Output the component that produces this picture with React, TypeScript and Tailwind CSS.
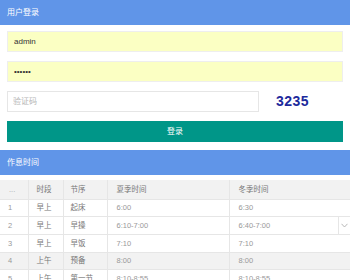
import React from "react";

const rows = [
  { no: "1", seg: "早上", item: "起床", summer: "6:00", winter: "6:30" },
  { no: "2", seg: "早上", item: "早操", summer: "6:10-7:00", winter: "6:40-7:00", menu: true },
  { no: "3", seg: "早上", item: "早饭", summer: "7:10", winter: "7:10" },
  { no: "4", seg: "上午", item: "预备", summer: "8:00", winter: "8:00", gray: true },
  { no: "5", seg: "上午", item: "第一节", summer: "8:10-8:55", winter: "8:10-8:55" },
];

const App = () => {
  return (
    <div
      className="w-[350px] h-[280px] overflow-hidden bg-white text-[#777]"
      style={{ fontFamily: '"Liberation Sans", "Noto Sans CJK SC", sans-serif' }}
    >
      {/* login */}
      <div className="h-[25px] bg-[#6095e8] flex items-center pl-[7px] text-white text-[8px]">
        用户登录
      </div>
      <div className="px-[7px] pt-[6px] flex flex-col gap-[9px]">
        <input
          readOnly
          value="admin"
          className="h-[21px] w-full bg-[#fbffc3] border border-[#eeeeee] px-[6px] text-[8px] text-[#333] outline-none"
        />
        <input
          readOnly
          type="password"
          value="123456"
          className="h-[21px] w-full bg-[#fbffc3] border border-[#eeeeee] px-[6px] text-[8px] text-[#333] outline-none"
        />
        <div className="flex items-center">
          <input
            readOnly
            placeholder="验证码"
            className="h-[21px] w-[252px] bg-white border border-[#e6e6e6] px-[5px] text-[8px] placeholder:text-[#b5b5b5] outline-none"
          />
          <span className="ml-[17px] text-[14px] font-bold text-[#1d2a9c] tracking-[0.5px]">3235</span>
        </div>
        <button className="h-[21px] w-full bg-[#009688] text-white text-[8px]">登录</button>
      </div>

      {/* schedule */}
      <div className="mt-[8px] h-[25px] bg-[#6095e8] flex items-center pl-[7px] text-white text-[8px]">
        作息时间
      </div>
      <table className="mt-[5px] w-[350px] table-fixed border-collapse text-[7.5px]">
        <colgroup>
          <col className="w-[28px]" />
          <col className="w-[35px]" />
          <col className="w-[44px]" />
          <col className="w-[122px]" />
          <col />
        </colgroup>
        <thead>
          <tr className="h-[19px] bg-[#f2f2f2]">
            <th className="font-normal text-left pl-[9px] border-r border-[#e6e6e6] text-[#aaa]">...</th>
            <th className="font-normal text-left pl-[8px] border-r border-[#e6e6e6]">时段</th>
            <th className="font-normal text-left pl-[7px] border-r border-[#e6e6e6]">节序</th>
            <th className="font-normal text-left pl-[9px] border-r border-[#e6e6e6]">夏季时间</th>
            <th className="font-normal text-left pl-[9px]">冬季时间</th>
          </tr>
        </thead>
        <tbody>
          {rows.map((r) => (
            <tr
              key={r.no}
              className={`h-[17.5px] border-t border-[#e6e6e6] ${r.gray ? "bg-[#f2f2f2]" : "bg-white"}`}
            >
              <td className="pl-[8px] border-r border-[#e6e6e6] text-[#999]">{r.no}</td>
              <td className="pl-[8px] border-r border-[#e6e6e6]">{r.seg}</td>
              <td className="pl-[7px] border-r border-[#e6e6e6]">{r.item}</td>
              <td className="pl-[9px] border-r border-[#e6e6e6] text-[#999]">{r.summer}</td>
              <td className="pl-[9px] text-[#999]">
                <div className="flex items-center">
                  <span className="flex-1">{r.winter}</span>
                  {r.menu && (
                    <span className="h-[17px] w-[12px] border-l border-[#e6e6e6] flex items-center justify-center">
                      <svg width="7" height="5" viewBox="0 0 7 5" fill="none">
                        <path d="M0.5 0.8L3.5 4L6.5 0.8" stroke="#b0b0b0" strokeWidth="0.9" />
                      </svg>
                    </span>
                  )}
                </div>
              </td>
            </tr>
          ))}
        </tbody>
      </table>
    </div>
  );
};

export default App;
